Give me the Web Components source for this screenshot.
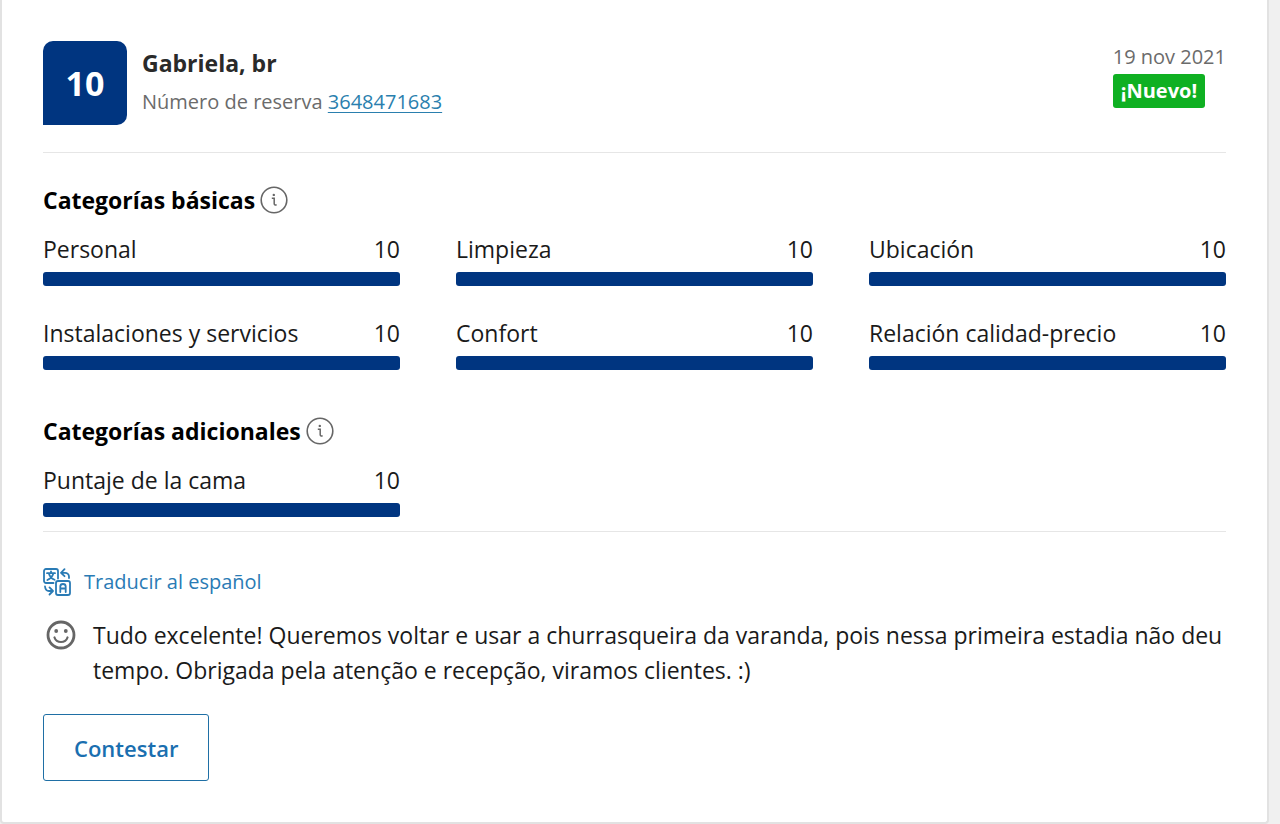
<!DOCTYPE html>
<html lang="es">
<head>
<meta charset="utf-8">
<meta name="viewport" content="width=device-width, initial-scale=1">
<title>Comentario de Gabriela</title>
<style>
  body {
    margin: 0;
    padding-right: 11px;
    background: #f0f0f0;
    color: #1a1a1a;
    font: 23px/36px "Open Sans", "Noto Sans", sans-serif;
  }
</style>
</head>
<body>
<review-card>
  <review-header slot="header" score="10" name="Gabriela, br" booking="3648471683" date="19 nov 2021" badge="¡Nuevo!"></review-header>
  <score-section heading="Categorías básicas">
    <score-bar label="Personal" value="10"></score-bar>
    <score-bar label="Limpieza" value="10"></score-bar>
    <score-bar label="Ubicación" value="10"></score-bar>
    <score-bar label="Instalaciones y servicios" value="10"></score-bar>
    <score-bar label="Confort" value="10"></score-bar>
    <score-bar label="Relación calidad-precio" value="10"></score-bar>
  </score-section>
  <score-section heading="Categorías adicionales">
    <score-bar label="Puntaje de la cama" value="10"></score-bar>
  </score-section>
  <translate-link slot="comment">Traducir al español</translate-link>
  <review-comment slot="comment">Tudo excelente! Queremos voltar e usar a churrasqueira da varanda, pois nessa primeira estadia não deu tempo. Obrigada pela atenção e recepção, viramos clientes. :)</review-comment>
  <reply-button slot="comment">Contestar</reply-button>
</review-card>
<script>
  class BaseElement extends HTMLElement {
    connectedCallback() {
      if (!this.shadowRoot) this.attachShadow({ mode: "open" }).innerHTML = this.render();
    }
    attr(name) { return this.getAttribute(name) || ""; }
  }

  customElements.define("review-card", class extends BaseElement {
    render() {
      return `<style>
        :host { display: block; }
        article { background: #fff; border: solid #e2e2e2; border-width: 0 2px 2px; border-radius: 0 0 4px 4px; padding: 41px; }
        .scores { display: grid; gap: 43px; padding: 29px 0 14px; border: solid #e6e6e6; border-width: 1px 0; }
        .comment { padding-top: 32px; }
      </style>
      <article>
        <slot name="header"></slot>
        <div class="scores"><slot></slot></div>
        <div class="comment"><slot name="comment"></slot></div>
      </article>`;
    }
  });

  customElements.define("review-header", class extends BaseElement {
    render() {
      return `<style>
        :host { display: block; padding-bottom: 27px; }
        header { display: flex; gap: 15px; }
        .score { flex: none; width: 84px; height: 84px; border-radius: 10px 10px 10px 0; background: #003580; color: #fff; display: grid; place-items: center; font-size: 34px; font-weight: 700; }
        .who { flex: 1; }
        h2 { margin: 4px 0 5px; font-size: 23px; line-height: 36px; font-weight: 700; color: #2a2a2a; }
        p { margin: 0; font-size: 20px; line-height: 32px; color: #6b6b6b; }
        a { color: #2a7fae; text-decoration-thickness: 1px; text-underline-offset: 3px; }
        .badge { display: table; padding: 0 8px; margin-top: 1px; line-height: 34px; border-radius: 3px; background: #0fb022; color: #fff; font-weight: 700; }
      </style>
      <header>
        <div class="score">${this.attr("score")}</div>
        <div class="who">
          <h2>${this.attr("name")}</h2>
          <p>Número de reserva <a href="#reserva">${this.attr("booking")}</a></p>
        </div>
        <div>
          <p>${this.attr("date")}</p>
          <p class="badge">${this.attr("badge")}</p>
        </div>
      </header>`;
    }
  });

  customElements.define("info-icon", class extends BaseElement {
    render() {
      return `<style>
        :host { display: block; width: 28px; height: 28px; color: #666; }
        svg { display: block; }
      </style>
      <svg width="28" height="28" viewBox="0 0 28 28" fill="none" stroke="currentColor" stroke-width="1.6" role="img" aria-label="Información">
        <circle cx="14" cy="14" r="12.8"/>
        <path d="M11.8 12.2h2.4v5.6q0 1.6 2.4 1" stroke-width="1.5"/>
        <circle cx="13.8" cy="8.9" r="1.2" fill="currentColor" stroke="none"/>
      </svg>`;
    }
  });

  customElements.define("score-section", class extends BaseElement {
    render() {
      return `<style>
        :host { display: block; }
        .title { display: flex; align-items: center; gap: 5px; margin-bottom: 13px; }
        h3 { margin: 0; font-size: 23px; line-height: 36px; font-weight: 700; color: #000; }
        .grid { display: grid; grid-template-columns: repeat(3, 1fr); gap: 29px 56px; }
      </style>
      <section>
        <div class="title"><h3>${this.attr("heading")}</h3><info-icon></info-icon></div>
        <div class="grid"><slot></slot></div>
      </section>`;
    }
  });

  customElements.define("score-bar", class extends BaseElement {
    render() {
      const value = this.attr("value");
      return `<style>
        :host { display: block; }
        .row { display: flex; justify-content: space-between; margin-bottom: 5px; }
        .track { height: 14px; border-radius: 3px; background: #e6e6e6; overflow: hidden; }
        .fill { height: 100%; width: ${Number(value) * 10}%; background: #003580; }
      </style>
      <div class="row"><span>${this.attr("label")}</span><span>${value}</span></div>
      <div class="track"><div class="fill"></div></div>`;
    }
  });

  customElements.define("translate-link", class extends BaseElement {
    render() {
      return `<style>
        :host { display: block; }
        a { display: inline-flex; align-items: center; gap: 13px; color: #2a7bb5; font-size: 20px; line-height: 36px; text-decoration: none; vertical-align: top; }
      </style>
      <a href="#traducir">
        <svg width="28" height="28" viewBox="0 0 28 28" fill="none" stroke="currentColor" stroke-width="1.8" stroke-linecap="round" stroke-linejoin="round" aria-hidden="true">
          <path d="M10.5 15H3a2 2 0 0 1-2-2V3a2 2 0 0 1 2-2h10a2 2 0 0 1 2 2v7.500"/>
          <path d="M4 5.200h8M8 3.300v1.900M10.400 5.200Q9.200 9.700 4.400 12M5.800 5.200Q7 9.700 11.600 11.800"/>
          <rect x="13" y="13" width="14" height="14" rx="2"/>
          <path d="M17.300 24v-5.500q0-2.500 2.700-2.500t2.700 2.500V24M17.300 20.500h5.400"/>
          <path d="M18.500 4.800H22a4 4 0 0 1 4 4V10M21.500 1.200 18 4.800l3.500 3.400"/>
          <path d="M2 18.500q.5 4.500 4 4.500h3.500M6.500 19.400 10 23l-3.500 3.500"/>
        </svg>
        <span><slot></slot></span>
      </a>`;
    }
  });

  customElements.define("review-comment", class extends BaseElement {
    render() {
      return `<style>
        :host { display: flex; gap: 17px; padding: 18px 0 26px 3px; }
        svg { flex: none; margin-top: 2px; color: #666; }
        p { margin: 0; line-height: 35px; }
      </style>
      <svg width="30" height="30" viewBox="0 0 30 30" fill="none" stroke="currentColor" stroke-width="2.800" stroke-linecap="round" role="img" aria-label="Comentario positivo">
        <circle cx="15" cy="15" r="13"/>
        <path d="M8.500 17.500q1.500 4.500 6.500 4.500t6.500-4.500" stroke-width="2.200"/>
        <g fill="currentColor" stroke="none"><circle cx="10.200" cy="11" r="1.900"/><circle cx="19.800" cy="11" r="1.900"/></g>
      </svg>
      <p><slot></slot></p>`;
    }
  });

  customElements.define("reply-button", class extends BaseElement {
    render() {
      return `<style>
        :host { display: flex; }
        button { font: inherit; font-size: 22px; font-weight: 600; line-height: 35px; padding: 16px 30px 14px; color: #1a6fb0; background: #fff; border: 1px solid #1f6fa5; border-radius: 3px; cursor: pointer; }
      </style>
      <button type="button"><slot></slot></button>`;
    }
  });
</script>
</body>
</html>
